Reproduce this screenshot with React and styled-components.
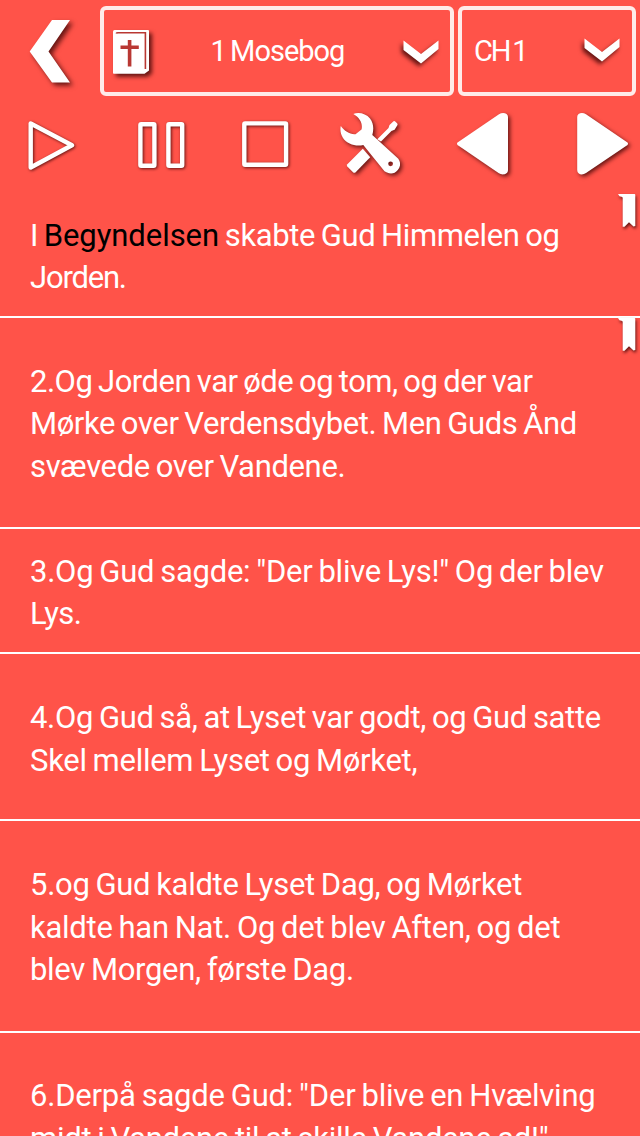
import React from 'react'
import styled, { createGlobalStyle } from 'styled-components'

const GlobalStyle = createGlobalStyle`
  * {
    box-sizing: border-box;
  }
  body {
    margin: 0;
    background: #ff5349;
    overflow: hidden;
  }
`
const Page = styled.div`
  width: 640px;
  height: 1136px;
  overflow: hidden;
  background: #ff5349;
  color: white;
  font-family: Roboto, "Liberation Sans", sans-serif;
`
const Header = styled.header`
  display: flex;
  gap: 4px;
  height: 100px;
  padding: 6px 4px 4px 0;
`
const BackButton = styled.button`
  width: 96px;
  height: 90px;
  padding: 0;
  border: none;
  background: none;
`
const Picker = styled.button`
  display: flex;
  align-items: center;
  justify-content: space-between;
  width: ${({ $width }) => $width}px;
  height: 90px;
  padding: ${({ $padding }) => $padding};
  border: 4px solid #ffebe9;
  border-radius: 6px;
  background: none;
  color: white;
  font-family: inherit;
  font-size: 29px;
`
const PickerLabel = styled.span`
  height: 36px;
  margin: ${({ $margin }) => $margin || 0};
  line-height: 36px;
  white-space: nowrap;
  letter-spacing: ${({ $spacing }) => $spacing}px;
  word-spacing: -2px;
`
const Icon = styled.svg`
  display: block;
  flex: none;
  overflow: visible;
  fill: white;
  filter: drop-shadow(${({ $shadow }) => $shadow || '2px 2px 2px'} rgba(50, 0, 0, 0.75));
`
const Toolbar = styled.nav`
  display: grid;
  grid-template-columns: 106px 107px 105px 109px 116px 97px;
  height: 92px;
`
const ToolButton = styled.button`
  height: 92px;
  padding: 0;
  border: none;
  background: none;
`
const Verse = styled.article`
  position: relative;
  height: ${({ $height }) => $height}px;
  padding: ${({ $top }) => $top}px 0 0 30px;
  border-bottom: 2px solid white;
`
const Line = styled.span`
  display: block;
  font-size: 31px;
  line-height: 42.5px;
  white-space: pre;
  letter-spacing: ${({ $spacing }) => $spacing}px;
  word-spacing: -1.5px;
`
const Word = styled.span`
  color: ${({ $marked }) => ($marked ? 'black' : 'inherit')};
  letter-spacing: ${({ $spacing }) => $spacing}px;
`
const Ribbon = styled.div`
  position: absolute;
  top: ${({ $top }) => $top}px;
  right: 4px;
`

const tools = [
  {
    name: 'Play',
    x: 0,
    width: 106,
    shape: <path d="M30.7 123.5V167.5L72 145.3Z" fill="none" stroke="white" strokeWidth="4.4" strokeLinejoin="round" />,
    shadow: '1px 1px 1.5px',
  },
  {
    name: 'Pause',
    x: 106,
    width: 107,
    shape: (
      <g fill="none" stroke="white" strokeWidth="4.4">
        <rect x="140.4" y="124.2" width="14" height="41.6" rx="0.8" />
        <rect x="168.4" y="124.2" width="13.8" height="41.6" rx="0.8" />
      </g>
    ),
    shadow: '1px 1px 1.5px',
  },
  {
    name: 'Stop',
    x: 213,
    width: 105,
    shape: <rect x="244.3" y="123.4" width="41.8" height="41.4" rx="0.8" fill="none" stroke="white" strokeWidth="4.4" />,
    shadow: '1px 1px 1.5px',
  },
  {
    name: 'Settings',
    x: 318,
    width: 109,
    shape: (
      <g>
        <path d="M353.3 114C359 111.8 366 113.8 370 118.5C373.6 123.2 374 129 372.3 135L398.3 158.8A9.3 9.3 0 0 1 387 172.6L384.5 171.2L363.3 145C356 147 347 144 343 138C340.5 134 340 129.5 340.8 126C344.5 131 350 134.8 355.5 134.2L361.5 129.5C363 124 360 117.500 353.3 114ZM390.6 161.4A2.4 2.4 0 1 0 390.6 166.2A2.4 2.4 0 1 0 390.6 161.4Z" fillRule="evenodd" />
        <path d="M377.3 139.3L388.5 128L389.5 125L393.5 121.2Q394.5 120.7 395.5 121.7L397.3 123.5Q398 124.5 397.2 125.5L394.6 129.7L391.4 131L381 141.5Z" />
        <path d="M362.8 148.8L370.2 157.2L355.4 172.4Q354.2 173.3 353 172.3L347.3 166.5Q346.3 165.3 347.3 164.2Z" />
      </g>
    ),
  },
  {
    name: 'Previous',
    x: 427,
    width: 116,
    shape: <path d="M457.5 142.5Q456.5 143.7 457.5 144.9L498.5 173.1C502 175.5 508 174.8 508 170V117C508 112.8 502.5 112 499 114.2Z" />,
  },
  {
    name: 'Next',
    x: 543,
    width: 97,
    shape: <path d="M627.5 142.5Q628.5 143.7 627.5 144.9L586 173.1C582.5 175.5 577.2 174.8 577.2 170V117C577.2 112.8 582.5 111.8 586 114.2Z" />,
  },
]

const verses = [
  {
    height: 126,
    top: 22.5,
    ribbon: 2,
    lines: [
      {
        words: [
          { text: 'I ', spacing: -0.5 },
          { text: 'Begyndelsen', spacing: -0.05, marked: true },
          { text: ' skabte Gud Himmelen og', spacing: -0.4 },
        ],
      },
      { text: 'Jorden.', spacing: -1.2 },
    ],
  },
  {
    height: 211,
    top: 42.5,
    ribbon: 0,
    lines: [
      { text: '2.Og Jorden var øde og tom, og der var', spacing: -0.49 },
      { text: 'Mørke over Verdensdybet. Men Guds Ånd', spacing: -0.39 },
      { text: 'svævede over Vandene.', spacing: -0.35 },
    ],
  },
  {
    height: 125,
    top: 21.5,
    lines: [
      { text: '3.Og Gud sagde: "Der blive Lys!" Og der blev', spacing: -0.25 },
      { text: 'Lys.', spacing: -0.5 },
    ],
  },
  {
    height: 167,
    top: 43,
    lines: [
      { text: '4.Og Gud så, at Lyset var godt, og Gud satte', spacing: -0.32 },
      { text: 'Skel mellem Lyset og Mørket,', spacing: -0.28 },
    ],
  },
  {
    height: 212,
    top: 43,
    lines: [
      { text: '5.og Gud kaldte Lyset Dag, og Mørket', spacing: -0.29 },
      { text: 'kaldte han Nat. Og det blev Aften, og det', spacing: -0.26 },
      { text: 'blev Morgen, første Dag.', spacing: -0.3 },
    ],
  },
  {
    height: 211,
    top: 42,
    lines: [
      { text: '6.Derpå sagde Gud: "Der blive en Hvælving', spacing: -0.21 },
      { text: 'midt i Vandene til at skille Vandene ad!"', spacing: -0.27 },
    ],
  },
]

const Chevron = () => (
  <Icon width="36" height="24" viewBox="0 0 36 24" $shadow="-2px 3px 2px">
    <path d="M0.5 0.5L18 14L35.5 0.5V9L18 23.5L0.5 10Z" />
  </Icon>
)

const BibleIcon = () => (
  <Icon width="36" height="44" viewBox="0 0 36 44" $shadow="3px 3px 2px">
    <path d="M1.5 0H35Q36 0 36 1V40.5L31.5 43.8H0.8Q0 43.8 0 43V1.5Q0 0 1.5 0Z" />
    <path d="M3.2 3.6Q3.5 2.7 5 2.7H32.4V39" fill="none" stroke="#b93833" strokeWidth="1.6" />
    <path d="M16.6 10V36.5M7.5 17.3H25.8" fill="none" stroke="#b93833" strokeWidth="3.6" />
  </Icon>
)

const VerseItem = ({ verse }) => {
  return (
    <Verse $height={verse.height} $top={verse.top}>
      {verse.lines.map((line, i) => (
        <Line key={i} $spacing={line.spacing || 0}>
          {line.words
            ? line.words.map((word) => (
                <Word key={word.text} $spacing={word.spacing} $marked={word.marked}>{word.text}</Word>
              ))
            : line.text}
        </Line>
      ))}
      {verse.ribbon !== undefined && (
        <Ribbon $top={verse.ribbon}>
          <Icon width="18" height="33" viewBox="0 0 18 33" $shadow="1.5px 2px 1.5px">
            <path d="M0 0H16.5Q17.3 0 17.3 1V32L15.5 32.5L11 28.3L6.5 32.7H4.700V3.5Q4 2.4 1.5 2.2Z" />
          </Icon>
        </Ribbon>
      )}
    </Verse>
  )
}

const App = () => {
  return (
    <Page>
      <GlobalStyle />
      <Header>
        <BackButton aria-label="Back">
          <Icon width="96" height="90" viewBox="0 6 96 90" $shadow="3px 3px 2.5px">
            <path d="M29.7 51.5L52 20H70L48.5 51.5L70 82.5H52Z" />
          </Icon>
        </BackButton>
        <Picker $width={354} $padding="2px 11px 0 9px">
          <BibleIcon />
          <PickerLabel $spacing={-1} $margin="0 0 2px 3px">1 Mosebog</PickerLabel>
          <Chevron />
        </Picker>
        <Picker $width={178} $padding="0 12px 2px 12px">
          <PickerLabel $spacing={-2.2} $margin="2px 0 0">CH 1</PickerLabel>
          <Chevron />
        </Picker>
      </Header>
      <Toolbar>
        {tools.map((tool) => (
          <ToolButton key={tool.name} aria-label={tool.name}>
            <Icon width={tool.width} height="92" viewBox={`${tool.x} 100 ${tool.width} 92`} $shadow={tool.shadow}>
              {tool.shape}
            </Icon>
          </ToolButton>
        ))}
      </Toolbar>
      <main>
        {verses.map((verse, i) => (
          <VerseItem key={i} verse={verse} />
        ))}
      </main>
    </Page>
  )
}

export default App
